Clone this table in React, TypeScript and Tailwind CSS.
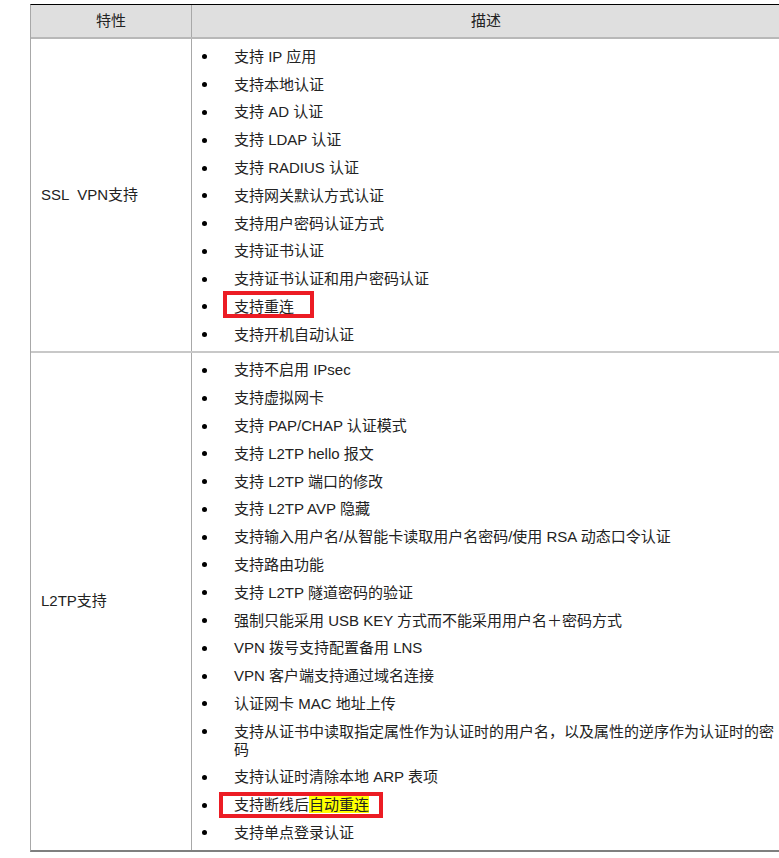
const sslItems: string[] = [
  '支持 IP 应用',
  '支持本地认证',
  '支持 AD 认证',
  '支持 LDAP 认证',
  '支持 RADIUS 认证',
  '支持网关默认方式认证',
  '支持用户密码认证方式',
  '支持证书认证',
  '支持证书认证和用户密码认证',
  '支持重连',
  '支持开机自动认证',
];

const l2tpItems: string[] = [
  '支持不启用 IPsec',
  '支持虚拟网卡',
  '支持 PAP/CHAP 认证模式',
  '支持 L2TP hello 报文',
  '支持 L2TP 端口的修改',
  '支持 L2TP AVP 隐藏',
  '支持输入用户名/从智能卡读取用户名密码/使用 RSA 动态口令认证',
  '支持路由功能',
  '支持 L2TP 隧道密码的验证',
  '强制只能采用 USB KEY 方式而不能采用用户名＋密码方式',
  'VPN 拨号支持配置备用 LNS',
  'VPN 客户端支持通过域名连接',
  '认证网卡 MAC 地址上传',
  '支持从证书中读取指定属性作为认证时的用户名，以及属性的逆序作为认证时的密码',
  '支持认证时清除本地 ARP 表项',
  '支持断线后自动重连',
  '支持单点登录认证',
];

const renderText = (text: string) => {
  if (text === '支持重连') {
    return (
      <span className="relative">
        支持重连
        <span className="absolute -left-[11px] -right-[20px] -top-[7px] -bottom-[3px] border-4 border-[#ec1c24]" />
      </span>
    );
  }
  if (text === '支持断线后自动重连') {
    return (
      <span className="relative">
        支持断线后<span className="bg-[#ffff00]">自动重连</span>
        <span className="absolute -left-[15px] -right-[14px] -top-[4px] -bottom-[5px] border-4 border-[#ec1c24]" />
      </span>
    );
  }
  return text;
};

const BulletList = ({ items, className }: { items: string[]; className: string }) => (
  <ul className={`pl-[9px] ${className}`}>
    {items.map((item) => (
      <li key={item} className="flex py-[4.9px] leading-[18px]">
        <span className="flex h-[18px] w-[33px] shrink-0 items-center">
          <span className="ml-[1px] h-[5px] w-[5px] rounded-full bg-black" />
        </span>
        <span className="flex-1">{renderText(item)}</span>
      </li>
    ))}
  </ul>
);

export default function App() {
  return (
    <div
      className="min-h-[858px] bg-white pl-[30px] pt-[4px] text-[15px] text-[#222]"
      style={{ fontFamily: '"Liberation Sans", "Noto Sans CJK SC", sans-serif' }}
    >
      <div className="w-[750px] border-t border-l border-t-black border-l-[#a8a8a8] border-b-2 border-b-[#7f7f7f]">
        <div className="grid h-[34px] grid-cols-[160px_1fr] border-b-2 border-[#b8b8b8] bg-[#dfdfdf]">
          <div className="flex items-center justify-center">特性</div>
          <div className="flex items-center justify-center border-l border-[#a8a8a8]">描述</div>
        </div>
        <div className="grid grid-cols-[160px_1fr] border-b-2 border-[#c8c8c8]">
          <div className="flex items-center whitespace-pre pl-[10px]">SSL  VPN支持</div>
          <div className="border-l border-[#a8a8a8]">
            <BulletList items={sslItems} className="pt-[4px] pb-[2px]" />
          </div>
        </div>
        <div className="grid grid-cols-[160px_1fr]">
          <div className="flex items-center pl-[10px]">L2TP支持</div>
          <div className="border-l border-[#a8a8a8]">
            <BulletList items={l2tpItems} className="pt-[4px] pb-[3px]" />
          </div>
        </div>
      </div>
    </div>
  );
}
